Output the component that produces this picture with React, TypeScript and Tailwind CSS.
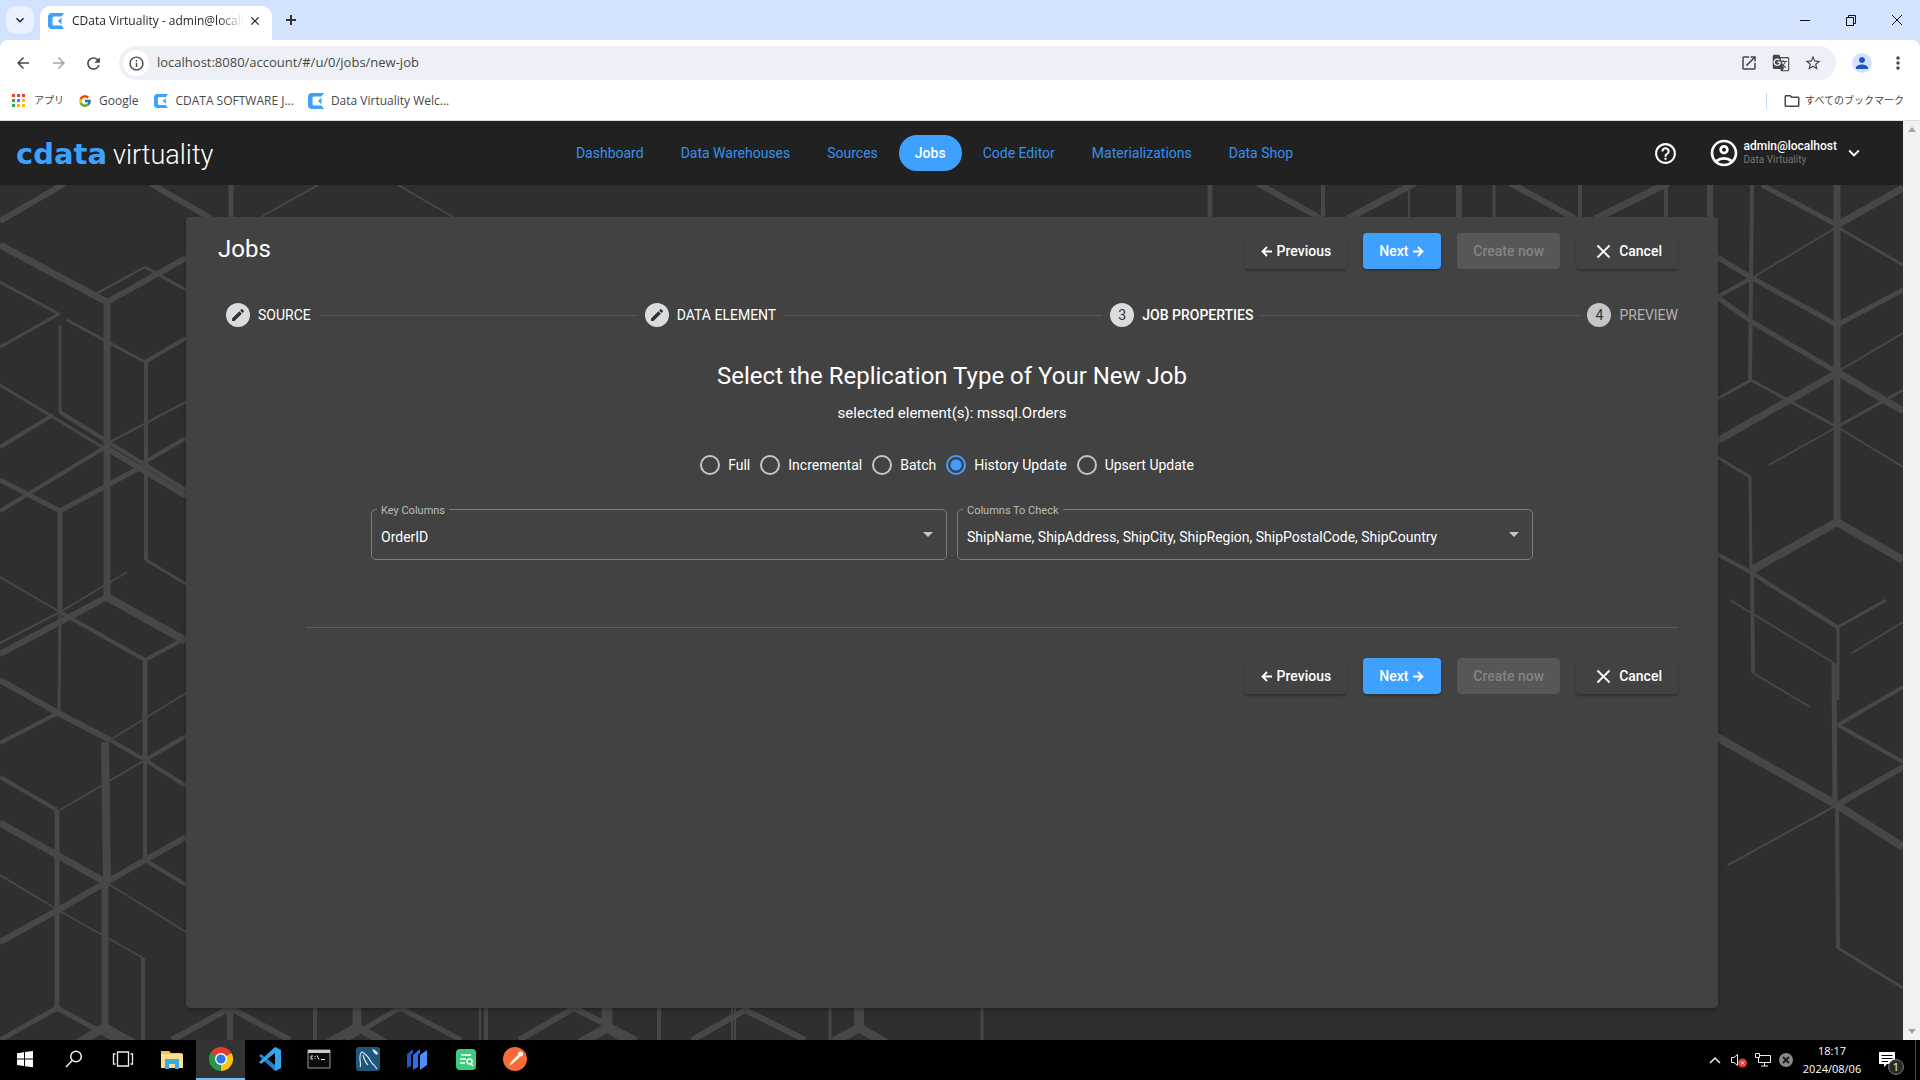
import { useState } from 'react';
import type { ReactNode } from 'react';
import {
  MdArrowBack,
  MdArrowForward,
  MdClose,
  MdEdit,
  MdGTranslate,
  MdHelpOutline,
  MdInfoOutline,
  MdKeyboardArrowDown,
  MdMoreVert,
  MdOpenInNew,
  MdOutlineAccountCircle,
  MdOutlineFolder,
  MdPerson,
  MdRefresh,
  MdStarBorder,
} from 'react-icons/md';
import { FcGoogle } from 'react-icons/fc';

const navItems = ['Dashboard', 'Data Warehouses', 'Sources', 'Jobs', 'Code Editor', 'Materializations', 'Data Shop'];
const replicationTypes = ['Full', 'Incremental', 'Batch', 'History Update', 'Upsert Update'];

// [stroke width, path] pairs of the cube pattern behind the card
const patternLines: [number, string][] = [
  [6, 'M0 221L64 184'],
  [6, 'M151 184L212 219'],
  [5, 'M231 185V217'],
  [2, 'M318 185L261 217'],
  [2, 'M398 185L453 217'],
  [7, 'M0 245L107 302V597'],
  [6, 'M107 302L186 258'],
  [2, 'M90 297L145 267'],
  [3, 'M145 267L186 290'],
  [3, 'M0 282L59 314L0 347'],
  [3, 'M60 325V412'],
  [4, 'M60 412L108 442L186 490'],
  [3, 'M67 320L145 362'],
  [4, 'M145 362L186 338'],
  [4, 'M146 362V560'],
  [3, 'M146 560L186 584'],
  [3, 'M0 385L104 448'],
  [4, 'M104 448L0 511'],
  [4, 'M0 447L53 415'],
  [2, 'M108 443L186 402'],
  [6, 'M108 449L186 496'],
  [4, 'M143 463L186 438'],
  [5, 'M0 480L60 511L143 466'],
  [5, 'M60 511V612'],
  [6, 'M0 654L107 597'],
  [8, 'M107 597L186 641'],
  [2, 'M0 577L60 612'],
  [2, 'M0 643L60 612L127 572'],
  [4, 'M60 612L145 660L186 638'],
  [3, 'M60 612L59 712'],
  [6, 'M0 680L58 713L110 740'],
  [4, 'M110 740L145 760L186 786'],
  [4, 'M0 743L58 713'],
  [5, 'M145 660V760'],
  [4, 'M145 760V860'],
  [2, 'M110 740L186 693'],
  [4, 'M145 760L186 736'],
  [2, 'M60 810L145 760'],
  [4, 'M0 777L57 810'],
  [5, 'M57 810V1008'],
  [8, 'M105 742L107 883'],
  [7, 'M105 883V1027'],
  [7, 'M0 823L107 883'],
  [2, 'M107 883L186 932'],
  [6, 'M0 942L58 910L145 860L186 837'],
  [4, 'M145 860L186 885'],
  [2, 'M0 875L58 910L143 958'],
  [4, 'M143 958V1040'],
  [5, 'M0 1040L57 1008L125 1045'],
  [8, 'M78 1043L105 1027L133 1043'],
  [6, 'M172 1040L230 1008L290 1040'],
  [6, 'M230 1008V1040'],
  [4, 'M315 1008V1040'],
  [9, 'M357 1008V1027'],
  [8, 'M328 1043L357 1027L385 1043'],
  [5, 'M345 1040L400 1008L461 1040'],
  [2, 'M480 1008V1040'],
  [4, 'M486 1008V1040'],
  [6, 'M519 1040L574 1008L636 1040'],
  [11, 'M607 1008V1027'],
  [9, 'M580 1043L607 1028L632 1043'],
  [4, 'M659 1008V1040'],
  [2, 'M732 1008V1040'],
  [2, 'M735 1008V1040'],
  [6, 'M692 1040L745 1010L805 1040'],
  [3, 'M830 1008V1040'],
  [10, 'M859 1008V1027'],
  [9, 'M832 1043L859 1028L886 1043'],
  [3, 'M982 1008V1040'],
  [5, 'M1210 185V217'],
  [4, 'M1323 185V217'],
  [2, 'M1409 185V217'],
  [6, 'M1459 185V217'],
  [3, 'M1494 185V217'],
  [4, 'M1580 185V217'],
  [4, 'M1666 185V217'],
  [6, 'M1710 185V217'],
  [6, 'M1257 183L1322 219'],
  [7, 'M1415 183L1347 219'],
  [6, 'M1510 183L1576 219'],
  [7, 'M1668 183L1595 219'],
  [4, 'M1752 185L1750 380'],
  [7, 'M1837 185V520'],
  [5, 'M1762 185L1837 225'],
  [7, 'M1837 225L1903 188'],
  [2, 'M1837 227L1752 278'],
  [4, 'M1752 278L1717 297'],
  [3, 'M1837 227L1903 265'],
  [5, 'M1717 257L1752 278L1837 325L1903 290'],
  [5, 'M1717 297L1752 322L1837 372'],
  [7, 'M1837 372L1903 411'],
  [2, 'M1837 372L1903 333'],
  [7, 'M1837 373L1717 441'],
  [3, 'M1717 399L1751 380L1837 427'],
  [2, 'M1837 427L1903 467'],
  [3, 'M1903 390L1837 427'],
  [2, 'M1837 427L1769 465'],
  [3, 'M1717 457L1750 477L1751 573'],
  [8, 'M1752 570L1837 522L1903 560'],
  [4, 'M1717 554L1752 573L1837 627'],
  [4, 'M1752 573L1753 673'],
  [2, 'M1753 673L1810 707'],
  [2, 'M1730 600L1834 663'],
  [5, 'M1834 663L1835 803'],
  [3, 'M1838 700V627L1886 600'],
  [2, 'M1852 653L1903 622'],
  [4, 'M1903 687L1838 725L1903 762'],
  [8, 'M1715 736L1837 805L1903 847'],
  [6, 'M1903 767L1837 805'],
  [2, 'M1837 805L1728 865'],
  [4, 'M1837 805L1838 948'],
  [3, 'M1838 948L1903 988'],
];

function CubePattern() {
  return (
    <svg className="absolute inset-0 h-full w-full" viewBox="0 185 1903 855" preserveAspectRatio="xMidYMin slice" fill="none" stroke="#474747" strokeLinejoin="round" aria-hidden="true">
      {patternLines.map(([width, d]) => (
        <path key={d} d={d} strokeWidth={width} />
      ))}
    </svg>
  );
}

function CDataMark({ className }: { className: string }) {
  return (
    <svg className={className} viewBox="0 0 16 16" aria-hidden="true">
      <path fill="#3ea0ff" d="M4 0H16L13.500 3.500H6Q4.500 3.500 4.500 5V11Q4.500 12.500 6 12.500H13.500L16 16H4Q0 16 0 12V4Q0 0 4 0Z" />
      <path fill="#3ea0ff" d="M13.500 4.500V11.500L10 8Z" />
    </svg>
  );
}

function BrowserChrome() {
  return (
    <div className="bg-[#d3e3fd] font-['Open_Sans','Noto_Sans_CJK_JP',sans-serif] text-[#474747]">
      <div className="flex h-10 items-center pl-1.5 text-[#1f1f1f]">
        <button aria-label="Search tabs" className="flex size-7 items-center justify-center rounded-[10px] bg-[#e9f1fe]">
          <MdKeyboardArrowDown size={16} />
        </button>
        <div className="ml-1.5 flex h-full items-end pt-1.5">
          <div className="flex h-full w-[232px] items-center rounded-t-[10px] bg-white pr-1.5 pb-1 pl-2">
            <CDataMark className="size-4 shrink-0" />
            <span className="ml-2 flex-1 bg-linear-to-r from-[#1f1f1f] from-85% to-transparent bg-clip-text text-xs whitespace-nowrap text-transparent">
              CData Virtuality - admin@locall
            </span>
            <button aria-label="Close tab" className="p-1">
              <MdClose size={14} />
            </button>
          </div>
        </div>
        <button aria-label="New tab" className="ml-3">
          <svg width="14" height="14" viewBox="0 0 14 14" stroke="#333" strokeWidth="2">
            <path d="M7 2V12M2 7H12" />
          </svg>
        </button>
        <div className="ml-auto flex items-center gap-8 pr-4">
          <button aria-label="Minimize">
            <svg width="14" height="14" viewBox="0 0 14 14" stroke="#111">
              <path d="M2 7.500H12" />
            </svg>
          </button>
          <button aria-label="Restore">
            <svg width="14" height="14" viewBox="0 0 14 14" stroke="#111" fill="none">
              <path d="M2.500 4.500H9.500V12.500H2.500ZM4.500 4V2.500H11.500V10.500H10" />
            </svg>
          </button>
          <button aria-label="Close">
            <svg width="14" height="14" viewBox="0 0 14 14" stroke="#111">
              <path d="M2 2L12 12M12 2L2 12" />
            </svg>
          </button>
        </div>
      </div>
      <div className="rounded-t-lg border-b border-[#dadce0] bg-white">
        <div className="flex h-[46px] items-center pr-3 pl-3">
          <button aria-label="Back" className="p-0.5"><MdArrowBack size={18} /></button>
          <button aria-label="Forward" className="ml-3.5 p-0.5 text-[#a5a5a5]"><MdArrowForward size={18} /></button>
          <button aria-label="Reload" className="ml-3 p-0.5"><MdRefresh size={19} /></button>
          <div className="ml-[14px] flex h-[34px] flex-1 items-center rounded-full bg-[#edf1f7] pr-[14px] pl-1">
            <span className="flex size-[26px] items-center justify-center rounded-full bg-white">
              <MdInfoOutline size={17} />
            </span>
            <input aria-label="Address" defaultValue="localhost:8080/account/#/u/0/jobs/new-job" className="ml-2 flex-1 bg-transparent text-[13px] outline-none" />
            <button aria-label="Open in new window"><MdOpenInNew size={18} /></button>
            <button aria-label="Translate" className="ml-3.5"><MdGTranslate size={18} /></button>
            <button aria-label="Bookmark" className="ml-3.5"><MdStarBorder size={18} /></button>
          </div>
          <button aria-label="Profile" className="ml-4 flex size-5 items-center justify-center rounded-full bg-[#d3e3fd] text-[#1a56c8]">
            <MdPerson size={18} />
          </button>
          <button aria-label="Menu" className="ml-4"><MdMoreVert size={20} /></button>
        </div>
        <div className="flex h-[34px] items-center pr-4 pb-1 pl-3 text-xs">
          <a href="#apps" className="flex items-center gap-2">
            <svg width="14" height="14" viewBox="0 0 14 14">
              <path fill="#ea4335" d="M0 0h3v3H0zM5 0h3v3H5zM10 0h3v3h-3z" />
              <path fill="#34a853" d="M0 5h3v3H0z" />
              <path fill="#4285f4" d="M5 5h3v3H5z" />
              <path fill="#fbbc04" d="M10 5h3v3h-3zM5 10h3v3H5zM10 10h3v3h-3z" />
              <path fill="#34a853" d="M0 10h3v3H0z" />
            </svg>
            <span className="text-[10px]">アプリ</span>
          </a>
          <a href="#google" className="ml-3.5 flex items-center gap-[7px]"><FcGoogle size={14} />Google</a>
          <a href="#cdata" className="ml-4 flex items-center gap-[7px]"><CDataMark className="size-[14px]" />CDATA SOFTWARE J...</a>
          <a href="#welcome" className="ml-3.5 flex items-center gap-[7px]"><CDataMark className="size-4" />Data Virtuality Welc...</a>
          <div className="ml-auto h-4 w-px bg-[#c7dafc]" />
          <a href="#bookmarks" className="ml-4 flex items-center gap-1">
            <MdOutlineFolder size={18} />
            <span className="text-[10px]">すべてのブックマーク</span>
          </a>
        </div>
      </div>
    </div>
  );
}

function AppHeader() {
  return (
    <header className="relative z-10 grid h-16 grid-cols-[1fr_auto_1fr] items-center bg-[#212121] pr-[38px] pl-4">
      <a href="#home" className="flex items-baseline gap-1.5 pt-0.5">
        <span className="font-['DejaVu_Sans',sans-serif] text-[29px] leading-8 font-bold text-[#3ea0ff]">cdata</span>
        <span className="text-[27px] leading-8 font-light text-white">virtuality</span>
      </a>
      <nav className="mr-3 flex gap-[5px] text-sm">
        {navItems.map((item) => (
          <a key={item} href={`#${item}`} className={`rounded-full px-4 py-2 ${item === 'Jobs' ? 'bg-[#3ea0ff] font-medium text-white' : 'text-[#3391ef]'}`}>
            {item}
          </a>
        ))}
      </nav>
      <div className="flex items-center justify-end text-white">
        <button aria-label="Help"><MdHelpOutline size={25} /></button>
        <button className="ml-[30px] flex items-center text-left">
          <MdOutlineAccountCircle size={32} />
          <span className="ml-1 flex flex-col">
            <span className="text-xs leading-[14px] font-medium">admin@localhost</span>
            <span className="text-[10px] leading-[14px] text-[#757575]">Data Virtuality</span>
          </span>
          <MdKeyboardArrowDown size={22} className="ml-1.5" />
        </button>
      </div>
    </header>
  );
}

function Arrow({ d }: { d: string }) {
  return (
    <svg width="13" height="14" viewBox="0 0 13 14" fill="none" stroke="currentColor" strokeWidth="1.800" aria-hidden="true">
      <path d={d} />
    </svg>
  );
}

function WizardButtons() {
  const raised = 'flex h-9 items-center gap-1 rounded px-4 shadow-[0_2px_2px_rgba(0,0,0,0.25)]';
  return (
    <div className="flex gap-4 text-sm font-medium text-white">
      <button className={raised}><Arrow d="M12 7.500H3M7 3L2.500 7.500L7 12" />Previous</button>
      <button className={`${raised} bg-[#3ea0ff]`}>Next<Arrow d="M1 7.500H10M6 3L10.500 7.500L6 12" /></button>
      <button disabled className="h-9 rounded bg-[#575757] px-4 text-[#838383]">Create now</button>
      <button className={raised}><MdClose size={23} />Cancel</button>
    </div>
  );
}

function Step({ badge, label, state = '' }: { badge: ReactNode; label: string; state?: 'active' | 'idle' | '' }) {
  return (
    <div className={`flex items-center gap-2 text-sm ${state === 'idle' ? 'text-[#b3b3b3]' : 'text-white'} ${state === 'active' ? 'font-medium' : ''}`}>
      <span className={`flex size-6 items-center justify-center rounded-full font-normal text-[#333] ${state === 'idle' ? 'bg-[#c4c5c6]' : 'bg-[#dadde0]'}`}>{badge}</span>
      {label}
    </div>
  );
}

function OutlinedSelect({ id, label, value }: { id: string; label: string; value: string }) {
  return (
    <div className="relative flex-1">
      <label htmlFor={id} className="absolute -top-[5px] left-1.5 bg-[#424242] px-1 text-[11px] leading-[14px] text-[#bdbdbd]">{label}</label>
      <select id={id} className="h-[51px] w-full appearance-none rounded-[5px] border border-[#7c7c7c] bg-transparent pt-1 pr-8 pl-[9px] text-sm text-white outline-none">
        <option>{value}</option>
      </select>
      <svg className="pointer-events-none absolute top-[23px] right-[14px]" width="10" height="5" viewBox="0 0 10 5" fill="#c6c6c6">
        <path d="M0 0H10L5 5Z" />
      </svg>
    </div>
  );
}

function JobWizard() {
  const [type, setType] = useState('History Update');

  return (
    <section className="relative flex-1 rounded bg-[#424242] pt-4 pr-10 pl-8 shadow-[0_2px_4px_rgba(0,0,0,0.3)]">
      <div className="flex justify-between">
        <h1 className="text-2xl leading-8 text-white">Jobs</h1>
        <WizardButtons />
      </div>
      <div className="mt-[34px] flex items-center gap-2 pl-2">
        <Step badge={<MdEdit size={16} />} label="SOURCE" />
        <div className="h-px flex-1 bg-[#5a5a5a]" />
        <Step badge={<MdEdit size={16} />} label="DATA ELEMENT" />
        <div className="h-px flex-1 bg-[#5a5a5a]" />
        <Step badge="3" label="JOB PROPERTIES" state="active" />
        <div className="h-px flex-1 bg-[#5a5a5a]" />
        <Step badge="4" label="PREVIEW" state="idle" />
      </div>
      <div className="flex flex-col items-center pl-2 text-white">
        <h2 className="mt-[33px] text-2xl leading-8">Select the Replication Type of Your New Job</h2>
        <p className="mt-[11px] text-[15px] leading-5">selected element(s): mssql.Orders</p>
        <div className="mt-8 flex gap-2.5 pr-2.5">
          {replicationTypes.map((name) => (
            <label key={name} className="flex items-center gap-2 text-sm">
              <input
                type="radio"
                name="replication"
                checked={type === name}
                onChange={() => setType(name)}
                className="size-5 appearance-none rounded-full border-2 border-[#c6c6c6] checked:border-[#3ea0ff] checked:bg-[radial-gradient(#3ea0ff_5px,transparent_6px)]"
              />
              {name}
            </label>
          ))}
        </div>
        <div className="mt-[34px] flex w-full gap-2.5 px-[145px]">
          <OutlinedSelect id="key-columns" label="Key Columns" value="OrderID" />
          <OutlinedSelect id="columns-to-check" label="Columns To Check" value="ShipName, ShipAddress, ShipCity, ShipRegion, ShipPostalCode, ShipCountry" />
        </div>
      </div>
      <hr className="mt-[67px] ml-[88px] border-[#5c5c5c]" />
      <div className="mt-[30px] flex justify-end">
        <WizardButtons />
      </div>
    </section>
  );
}

function TaskbarItem({ label, active, children }: { label: string; active?: boolean; children: ReactNode }) {
  return (
    <button aria-label={label} className={`flex h-full w-[49px] items-center justify-center border-b-2 ${active ? 'border-[#76b9ed] bg-[#333]' : 'border-transparent'}`}>
      <svg width="24" height="24" viewBox="0 0 24 24" fill="none">
        {children}
      </svg>
    </button>
  );
}

function Taskbar() {
  return (
    <footer className="flex h-10 shrink-0 items-center bg-black text-white">
      <TaskbarItem label="Start">
        <path fill="#fff" d="M4 6.200L11 5.200V11.600H4ZM12 5L20 4V11.600H12ZM4 12.600H11V19L4 18ZM12 12.600H20V20.300L12 19.200Z" />
      </TaskbarItem>
      <TaskbarItem label="Search">
        <circle cx="14" cy="9.500" r="5.300" stroke="#eee" strokeWidth="1.500" />
        <path stroke="#eee" strokeWidth="1.500" d="M10.300 13.500L4 20" />
      </TaskbarItem>
      <TaskbarItem label="Task view">
        <path stroke="#eee" strokeWidth="1.300" d="M6.500 5H17.500V19H6.500ZM4.500 7H2.500V17H4.500M19.500 7H21.500V17H19.500" />
      </TaskbarItem>
      <TaskbarItem label="File Explorer">
        <path fill="#f5c44e" d="M1 4H9L11 6H22V9H1Z" />
        <path fill="#fde08c" d="M1 7H23V21H1Z" />
        <path fill="#3ba9e8" d="M5 13Q5 12 6 12H18Q19 12 19 13V22H15V17H9V22H5Z" />
      </TaskbarItem>
      <TaskbarItem label="Chrome" active>
        <path fill="#e33b2e" d="M12 12L1.600 6A12 12 0 0 1 22.400 6Z" />
        <path fill="#fbc116" d="M12 12L22.400 6A12 12 0 0 1 12 24Z" />
        <path fill="#279847" d="M12 12L12 24A12 12 0 0 1 1.600 6Z" />
        <path fill="#e33b2e" d="M12 6H22.400L12 3ZM6.800 15L1.600 6L9 5Z" />
        <path fill="#279847" d="M6.800 15L1.600 6L6 8Z" />
        <path fill="#fbc116" d="M17.200 15L12 24L18 19Z" />
        <circle cx="12" cy="12" r="6" fill="#fff" />
        <circle cx="12" cy="12" r="4.600" fill="#2a74e8" />
      </TaskbarItem>
      <TaskbarItem label="Visual Studio Code">
        <path fill="#2382c9" d="M17 0L23 3V21L17 24L1 9L3 7L17 18Z" />
        <path fill="#35a4ee" d="M17 0L23 3V21L17 24L17 6L3 17L1 15Z" />
      </TaskbarItem>
      <TaskbarItem label="Command Prompt">
        <path fill="#0c0c0c" stroke="#9a9a9a" d="M1 3H23V21H1Z" />
        <path fill="#ccc" d="M1 3H23V6H1Z" />
        <path stroke="#eee" d="M6 9H4V12H6M8 9V10M8 11V12M10 8.500L12 12.500M14 12.500H18" />
      </TaskbarItem>
      <TaskbarItem label="MySQL Workbench">
        <rect width="24" height="24" rx="3" fill="#1f567c" />
        <path stroke="#dce9f2" strokeWidth="1.200" d="M4 20C6 18 2 10 5 6C6 4 8 6 10 8C14 11 15 17 18 18L21 22M7 8C8 12 9 15 12 18" />
        <path fill="#dce9f2" d="M16 2L19 3L22 6L21 8L18 6Z" />
      </TaskbarItem>
      <TaskbarItem label="Data Virtuality Studio">
        <path fill="#2456c4" d="M2 7L8 2V6L6 8V19L2 21Z" />
        <path fill="#2f6fe0" d="M8 8L15 2V6L13 8V20L8 23Z" />
        <path fill="#4b8ff8" d="M15 8L22 3V18L15 23Z" />
      </TaskbarItem>
      <TaskbarItem label="Log viewer">
        <rect x="2" y="2" width="20" height="21" rx="4" fill="#3ccb7f" />
        <path stroke="#fff" strokeWidth="1.500" d="M7 8H17M6 12H12M6 16H11M17 17L19 19" />
        <circle cx="15.500" cy="14.500" r="2.500" stroke="#fff" strokeWidth="1.500" />
      </TaskbarItem>
      <TaskbarItem label="Postman">
        <circle cx="12" cy="12" r="12" fill="#f76b39" />
        <path fill="#fff" d="M15 8L17 10L9 17L6 19L8 15Z" />
        <circle cx="17.500" cy="7" r="2.500" fill="#fff" />
      </TaskbarItem>
      <div className="ml-auto flex h-full items-center font-['Open_Sans',sans-serif]">
        <svg width="14" height="14" viewBox="0 0 14 14" fill="none" stroke="#eee" strokeWidth="1.500"><path d="M2 10L7 5L12 10" /></svg>
        <svg className="ml-2" width="18" height="16" viewBox="0 0 18 16" fill="none">
          <path stroke="#eee" d="M1.500 5.500H4L7.500 2.500V13.500L4 10.500H1.500Z" />
          <circle cx="12.500" cy="11" r="4.500" fill="#e03c31" />
          <path stroke="#fff" d="M11 9.500L14 12.500M14 9.500L11 12.500" />
        </svg>
        <svg className="ml-1.5" width="18" height="16" viewBox="0 0 18 16" fill="none" stroke="#eee">
          <path d="M6 3.500H16.500V10.500H4.500V6M10.500 10.500V14M7 14H14M1.500 1.500H5.500V5.500H1.500Z" />
        </svg>
        <svg className="ml-1.5" width="16" height="16" viewBox="0 0 16 16" fill="none">
          <circle cx="8" cy="8" r="7" fill="#8a8a8a" />
          <path stroke="#1a1a1a" strokeWidth="1.800" d="M5 5L11 11M11 5L5 11" />
        </svg>
        <div className="ml-2 flex w-[60px] flex-col items-center text-[11px] leading-[18px]">
          <span>18:17</span>
          <span>2024/08/06</span>
        </div>
        <button aria-label="Notifications" className="relative mr-[11px] ml-4 pr-2">
          <svg width="18" height="18" viewBox="0 0 18 18">
            <path fill="#fff" d="M1 1H17V13H9L6 16V13H1Z" />
            <path stroke="#000" d="M3.500 4.500H14.500M3.500 7.500H14.500M3.500 10.500H10" />
          </svg>
          <span className="absolute top-2 right-0 flex size-4 items-center justify-center rounded-full border border-[#777] bg-[#2b2b2b] text-[11px]">1</span>
        </button>
        <div className="mr-1 h-full w-px bg-[#444]" />
      </div>
    </footer>
  );
}

export default function App() {
  return (
    <div className="flex min-h-screen flex-col font-[Roboto,sans-serif]">
      <BrowserChrome />
      <div className="flex flex-1">
        <div className="flex flex-1 flex-col bg-[#2f2f2f]">
          <AppHeader />
          <main className="relative flex flex-1 flex-col py-8 pr-[185px] pl-[186px]">
            <CubePattern />
            <JobWizard />
          </main>
        </div>
        <div className="flex w-[17px] flex-col items-center justify-between bg-[#f1f1f1] py-1.5" aria-hidden="true">
          <svg width="8" height="5" viewBox="0 0 8 5" fill="#a3a3a3"><path d="M0 5H8L4 0Z" /></svg>
          <svg width="8" height="5" viewBox="0 0 8 5" fill="#a3a3a3"><path d="M0 0H8L4 5Z" /></svg>
        </div>
      </div>
      <Taskbar />
    </div>
  );
}
